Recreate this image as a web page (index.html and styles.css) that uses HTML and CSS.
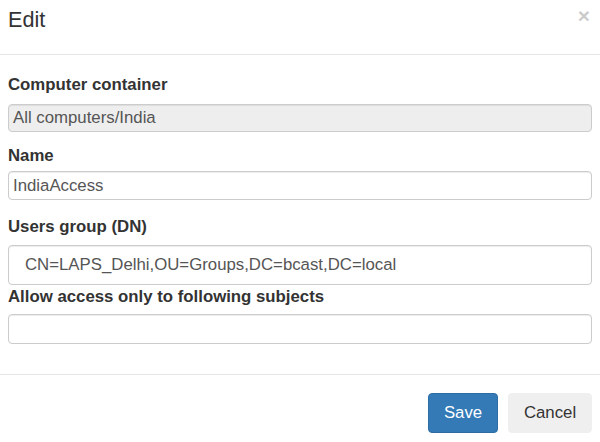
FILE: index.html
```html
<!DOCTYPE html>
<html>
<head>
<meta charset="utf-8">
<link rel="stylesheet" href="styles.css">
</head>
<body>
<div class="modal">
  <div class="modal-header">
    <h4 class="modal-title">Edit</h4>
    <span class="close">&times;</span>
  </div>
  <div class="modal-body">
    <label class="lbl l1">Computer container</label>
    <div class="input readonly">All computers/India</div>
    <label class="lbl l2">Name</label>
    <div class="input">IndiaAccess</div>
    <label class="lbl l3">Users group (DN)</label>
    <div class="input tall">CN=LAPS_Delhi,OU=Groups,DC=bcast,DC=local</div>
    <label class="lbl l4">Allow access only to following subjects</label>
    <div class="input empty"></div>
  </div>
  <div class="modal-footer">
    <button class="btn primary">Save</button>
    <button class="btn default">Cancel</button>
  </div>
</div>
</body>
</html>
```

FILE: styles.css
```css
html, body {
  margin: 0;
  padding: 0;
  background: #fff;
}
body {
  font-family: "Liberation Sans", Arial, sans-serif;
  color: #333;
  width: 600px;
  height: 442px;
  overflow: hidden;
}
.modal {
  display: flex;
  flex-direction: column;
}
.modal-header {
  height: 54px;
  border-bottom: 1px solid #e5e5e5;
  display: flex;
  justify-content: space-between;
  align-items: flex-start;
  padding: 0 8px;
}
.modal-title {
  margin: 0;
  padding-top: 6px;
  font-size: 21.6px;
  font-weight: normal;
  line-height: 28px;
  color: #333;
}
.close {
  font-size: 21px;
  font-weight: bold;
  color: #000;
  opacity: 0.2;
  line-height: 20px;
  padding-top: 6px;
  margin-right: 2px;
}
.modal-body {
  display: flex;
  flex-direction: column;
  padding: 21px 8px 0 8px;
}
.lbl {
  font-size: 16.8px;
  font-weight: bold;
  line-height: 18px;
  display: block;
}
.l1 { margin-bottom: 10px; }
.l2 { margin-top: 15px; margin-bottom: 6px; }
.l3 { margin-top: 18px; margin-bottom: 9px; }
.l4 { margin-top: 3px; margin-bottom: 8px; }
.input {
  box-sizing: border-box;
  border: 1px solid #ccc;
  border-radius: 4px;
  box-shadow: inset 0 1px 1px rgba(0,0,0,0.075);
  font-size: 16.8px;
  color: #555;
  padding: 0 4px;
  height: 29px;
  line-height: 27px;
  width: 584px;
}
.readonly {
  background: #eee;
  height: 28px;
  line-height: 26px;
}
.tall {
  height: 40px;
  line-height: 38px;
  padding-left: 16px;
}
.empty { height: 30px; }
.modal-footer {
  margin-top: 30px;
  border-top: 1px solid #e5e5e5;
  display: flex;
  justify-content: flex-end;
  gap: 10px;
  padding: 18px 8px 0 8px;
}
.btn {
  font-family: "Liberation Sans", Arial, sans-serif;
  font-size: 16.8px;
  height: 40px;
  border-radius: 4px;
  border: 1px solid transparent;
  padding: 0;
  cursor: pointer;
}
.primary {
  background: #337ab7;
  border-color: #2e6da4;
  color: #fff;
  width: 70px;
}
.default {
  background: #efefef;
  border-color: #efefef;
  color: #333;
  width: 84px;
}
```
